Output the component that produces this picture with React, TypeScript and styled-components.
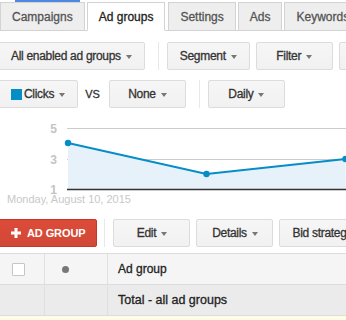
import React from "react";
import styled, { createGlobalStyle } from "styled-components";

const Global = createGlobalStyle`
  html, body { margin: 0; padding: 0; background: #fff; }
  body { font-family: "Liberation Sans", Arial, sans-serif; overflow: hidden; }
`;

const Page = styled.div`
  width: 346px;
  height: 320px;
  overflow: hidden;
  font-family: "Liberation Sans", Arial, sans-serif;
  font-size: 12px;
  color: #333;
  -webkit-text-stroke: 0.3px currentColor;
`;

const TopStrip = styled.div`
  height: 2px;
  display: flex;
`;

const BlueBar = styled.div`
  margin-left: 15px;
  width: 65px;
  height: 2px;
  background: #4d87e0;
`;

const TabBar = styled.div`
  display: flex;
  align-items: flex-end;
  height: 28px;
  border-bottom: 1px solid #d3d3d3;
  white-space: nowrap;
`;

const Tab = styled.div<{ $active?: boolean }>`
  flex-shrink: 0;
  box-sizing: border-box;
  height: 29px;
  margin-bottom: -1px;
  margin-right: ${(p) => (p.$active ? 3 : 2)}px;
  padding: 0 11px;
  display: flex;
  align-items: center;
  border: 1px solid #d3d3d3;
  border-bottom-color: ${(p) => (p.$active ? "#fff" : "#d3d3d3")};
  background: ${(p) => (p.$active ? "#fff" : "#eeeeee")};
  color: ${(p) => (p.$active ? "#222" : "#555")};
`;

const Toolbar = styled.div<{ $top: number }>`
  display: flex;
  align-items: center;
  margin-top: ${(p) => p.$top}px;
  margin-left: -2px;
  white-space: nowrap;
`;

const Button = styled.div`
  flex-shrink: 0;
  box-sizing: border-box;
  height: 28px;
  min-width: 77px;
  padding: 0 12px;
  margin-right: 6px;
  display: flex;
  align-items: center;
  justify-content: center;
  border: 1px solid #dcdcdc;
  border-radius: 2px;
  background: linear-gradient(#f6f6f6, #f1f1f1);
  color: #333;
  letter-spacing: -0.3px;
`;

const RedButton = styled(Button)`
  border-color: #c53727;
  background: linear-gradient(#dd4b39, #d14836);
  color: #fff;
  margin-right: 0;
  padding: 0 11px 0 12px;
  font-size: 11px;
  font-weight: bold;
  letter-spacing: -0.1px;
  -webkit-text-stroke: 0;
`;

const Arrow = styled.span`
  display: inline-block;
  width: 0;
  height: 0;
  margin-left: 5px;
  margin-top: 1px;
  border-left: 3.5px solid transparent;
  border-right: 3.5px solid transparent;
  border-top: 4px solid #777;
`;

const Swatch = styled.span`
  display: inline-block;
  width: 11px;
  height: 11px;
  margin-right: 2px;
  background: #058dc7;
`;

const Sep = styled.div`
  flex-shrink: 0;
  width: 1px;
  height: 28px;
  background: #e8e8e8;
  margin: 0 8px 0 7px;
`;

const Vs = styled.span`
  font-size: 11px;
  color: #333;
  margin: 0 9px 0 7px;
`;

const PlusIcon = styled.svg`
  margin-right: 6px;
  flex-shrink: 0;
`;

const Chart = styled.svg`
  display: block;
  width: 346px;
  height: 102px;
  -webkit-text-stroke: 0;
`;

const Table = styled.div`
  margin-top: 6px;
  border-top: 1px solid #dddddd;
`;

const Row = styled.div<{ $bg: string }>`
  display: grid;
  grid-template-columns: 45px 63px 1fr;
  height: 31px;
  box-sizing: border-box;
  border-bottom: 1px solid #dddddd;
  background: ${(p) => p.$bg};
`;

const Cell = styled.div<{ $pad?: number; $last?: boolean; $size?: number }>`
  display: flex;
  align-items: center;
  padding-left: ${(p) => p.$pad ?? 10}px;
  border-right: ${(p) => (p.$last ? "none" : "1px solid #e0e0e0")};
  font-size: ${(p) => p.$size ?? 12}px;
  color: #222;
  white-space: nowrap;
`;

const Checkbox = styled.span`
  display: inline-block;
  box-sizing: border-box;
  width: 13px;
  height: 13px;
  border: 1px solid #c6c6c6;
  border-radius: 1px;
  background: #fff;
`;

const Dot = styled.span`
  display: inline-block;
  width: 7px;
  height: 7px;
  border-radius: 50%;
  background: #777;
`;

const YellowRow = styled.div`
  height: 10px;
  background: #fdfde8;
`;

export default function App() {
  const pts: [number, number][] = [
    [68, 35],
    [206.5, 66],
    [345.5, 51],
  ];
  const line = pts.map((p) => p.join(",")).join(" ");
  const area = `68,81 ${line} 346,81`;
  return (
    <Page>
      <Global />
      <TopStrip>
        <BlueBar />
      </TopStrip>
      <TabBar>
        <Tab>Campaigns</Tab>
        <Tab $active>Ad groups</Tab>
        <Tab>Settings</Tab>
        <Tab>Ads</Tab>
        <Tab>Keywords</Tab>
        <Tab>Audiences</Tab>
      </TabBar>

      <Toolbar $top={11}>
        <Button>
          All enabled ad groups
          <Arrow />
        </Button>
        <Sep />
        <Button>
          Segment
          <Arrow />
        </Button>
        <Button>
          Filter
          <Arrow />
        </Button>
        <Button>
          Columns
          <Arrow />
        </Button>
      </Toolbar>

      <Toolbar $top={10}>
        <Button style={{ minWidth: 0, marginRight: 0 }}>
          <Swatch />
          Clicks
          <Arrow />
        </Button>
        <Vs>VS</Vs>
        <Button>
          None
          <Arrow />
        </Button>
        <Sep />
        <Button>
          Daily
          <Arrow />
        </Button>
      </Toolbar>

      <Chart viewBox="0 0 346 102">
        <line x1="67" x2="346" y1="20.5" y2="20.5" stroke="#cccccc" strokeWidth="1" />
        <line x1="67" x2="346" y1="51.5" y2="51.5" stroke="#cccccc" strokeWidth="1" />
        <polygon points={area} fill="#e6f1f9" />
        <line x1="67" x2="346" y1="81.5" y2="81.5" stroke="#333" strokeWidth="1.3" />
        <polyline points={line} fill="none" stroke="#058dc7" strokeWidth="2" />
        {pts.map(([x, y], i) => (
          <circle key={i} cx={x} cy={y} r="3.2" fill="#058dc7" />
        ))}
        <g fontFamily="Liberation Sans, Arial, sans-serif" fontSize="12" fontWeight="bold" fill="#c4c4c4" textAnchor="end">
          <text x="57" y="24.5">5</text>
          <text x="57" y="55.5">3</text>
          <text x="57" y="85.5">1</text>
        </g>
        <text x="7" y="95" fontFamily="Liberation Sans, Arial, sans-serif" fontSize="11" fill="#c8c8c8">
          Monday, August 10, 2015
        </text>
      </Chart>

      <Toolbar $top={9}>
        <RedButton>
          <PlusIcon width="10" height="10" viewBox="0 0 10 10">
            <rect x="3.5" y="0" width="3" height="10" fill="#fff" />
            <rect x="0" y="3.5" width="10" height="3" fill="#fff" />
          </PlusIcon>
          AD GROUP
        </RedButton>
        <Sep />
        <Button>
          Edit
          <Arrow />
        </Button>
        <Button>
          Details
          <Arrow />
        </Button>
        <Button>
          Bid strategy
          <Arrow />
        </Button>
      </Toolbar>

      <Table>
        <Row $bg="#f5f5f5">
          <Cell $pad={12}>
            <Checkbox />
          </Cell>
          <Cell $pad={17}>
            <Dot />
          </Cell>
          <Cell $last>Ad group</Cell>
        </Row>
        <Row $bg="#ebebeb">
          <Cell />
          <Cell />
          <Cell $last $size={12.5}>
            Total - all ad groups
          </Cell>
        </Row>
        <YellowRow />
      </Table>
    </Page>
  );
}
